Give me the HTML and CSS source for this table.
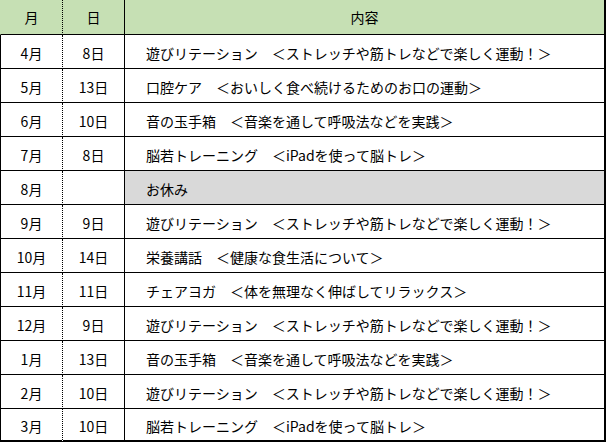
FILE: index.html
```html
<!DOCTYPE html>
<html lang="ja">
<head>
<meta charset="utf-8">
<link rel="stylesheet" href="styles.css">
</head>
<body>
<table class="sched">
  <thead>
    <tr><th class="m">月</th><th class="d">日</th><th class="c">内容</th></tr>
  </thead>
  <tbody>
    <tr><td class="m">4月</td><td class="d">8日</td><td class="c">遊びリテーション　＜ストレッチや筋トレなどで楽しく運動！＞</td></tr>
    <tr><td class="m">5月</td><td class="d">13日</td><td class="c">口腔ケア　＜おいしく食べ続けるためのお口の運動＞</td></tr>
    <tr><td class="m">6月</td><td class="d">10日</td><td class="c">音の玉手箱　＜音楽を通して呼吸法などを実践＞</td></tr>
    <tr><td class="m">7月</td><td class="d">8日</td><td class="c">脳若トレーニング　＜iPadを使って脳トレ＞</td></tr>
    <tr><td class="m">8月</td><td class="d"></td><td class="c off">お休み</td></tr>
    <tr><td class="m">9月</td><td class="d">9日</td><td class="c">遊びリテーション　＜ストレッチや筋トレなどで楽しく運動！＞</td></tr>
    <tr><td class="m">10月</td><td class="d">14日</td><td class="c">栄養講話　＜健康な食生活について＞</td></tr>
    <tr><td class="m">11月</td><td class="d">11日</td><td class="c">チェアヨガ　＜体を無理なく伸ばしてリラックス＞</td></tr>
    <tr><td class="m">12月</td><td class="d">9日</td><td class="c">遊びリテーション　＜ストレッチや筋トレなどで楽しく運動！＞</td></tr>
    <tr><td class="m">1月</td><td class="d">13日</td><td class="c">音の玉手箱　＜音楽を通して呼吸法などを実践＞</td></tr>
    <tr><td class="m">2月</td><td class="d">10日</td><td class="c">遊びリテーション　＜ストレッチや筋トレなどで楽しく運動！＞</td></tr>
    <tr class="last"><td class="m">3月</td><td class="d">10日</td><td class="c">脳若トレーニング　＜iPadを使って脳トレ＞</td></tr>
  </tbody>
</table>
</body>
</html>
```
FILE: styles.css
```css
html, body {
  margin: 0;
  padding: 0;
  background: #fff;
}
body {
  font-family: "Noto Sans CJK JP", "Noto Sans", sans-serif;
  font-size: 14px;
  color: #000;
}
.sched {
  border-collapse: separate;
  border-spacing: 0;
  table-layout: fixed;
  width: 606px;
}
.sched th,
.sched td {
  box-sizing: border-box;
  padding: 0;
  font-weight: normal;
  line-height: 18px;
  border-bottom: 1px solid #000;
  vertical-align: middle;
  white-space: nowrap;
  overflow: hidden;
}
.sched th {
  height: 35px;
  background: #c6e0b4;
  text-align: center;
}
.sched td {
  height: 34px;
  padding-top: 2px;
}
.sched .m {
  width: 63px;
  text-align: center;
  border-left: 1px solid #000;
  border-right: 1px dotted #000;
}
.sched th.m {
  border-left-color: #c6e0b4;
}
.sched .d {
  width: 62px;
  text-align: center;
  border-right: 1px solid #000;
}
.sched .c {
  width: 481px;
  border-right: 2px solid #000;
}
.sched td.c {
  padding-left: 21px;
  text-align: left;
}
.sched td.off {
  background: #d9d9d9;
}
.sched tr.last td {
  height: 33px;
  border-bottom: 2px solid #000;
}
```
